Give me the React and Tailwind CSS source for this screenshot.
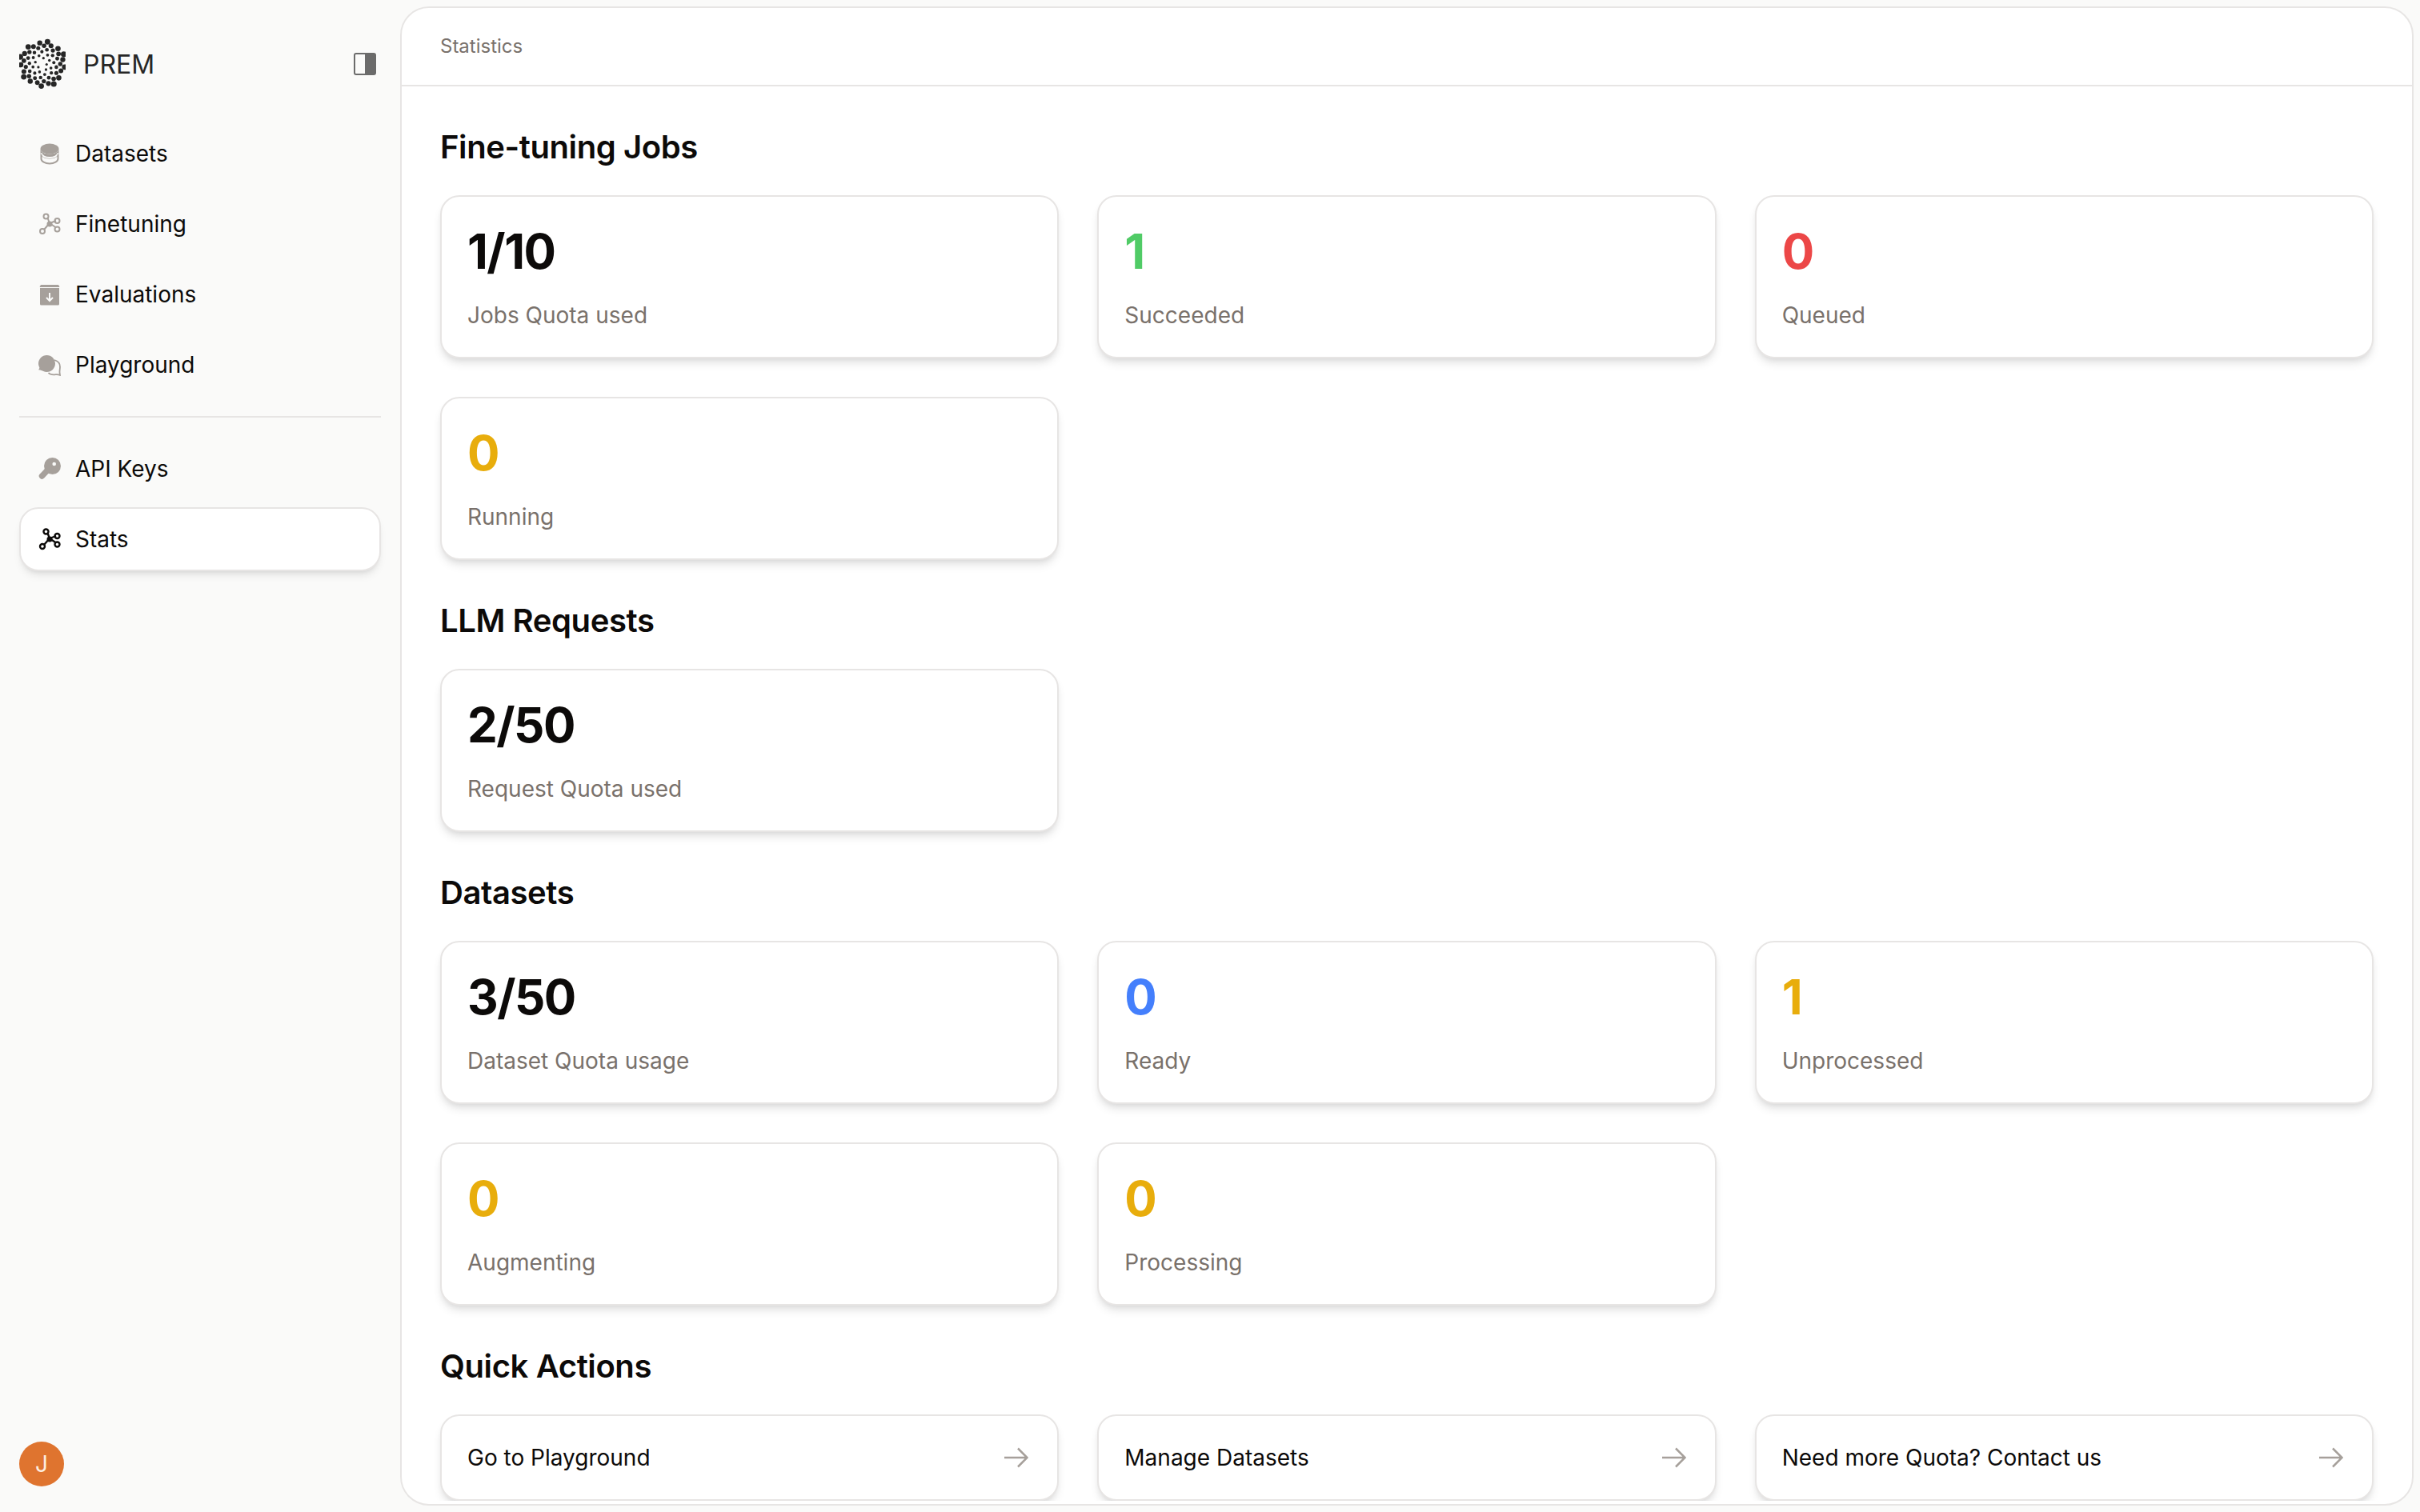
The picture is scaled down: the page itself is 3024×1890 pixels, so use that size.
import React from "react";

function Logo() {
  const dots = [];
  const cx = 29, cy = 32;
  for (let n = 2; n <= 62; n++) {
    const a = n * 2.39996 + 1.57;
    const r = 3.72 * Math.sqrt(n);
    const s = 1.5 + 2.1 * (n / 62);
    dots.push(<circle key={n} cx={cx + r * Math.cos(a)} cy={cy + r * Math.sin(a)} r={s} fill="#262626" />);
  }
  return (
    <svg width="58" height="64" viewBox="0 0 58 64" className="shrink-0">
      {dots}
    </svg>
  );
}

function PanelIcon() {
  return (
    <svg width="28" height="28" viewBox="0 0 28 28" className="shrink-0">
      <rect x="1" y="1" width="26" height="26" rx="2" fill="none" stroke="#6b6b6b" strokeWidth="2" />
      <rect x="14" y="1" width="13" height="26" rx="1" fill="#6b6b6b" />
    </svg>
  );
}

function DbIcon() {
  return (
    <svg width="28" height="28" viewBox="0 0 28 28" className="shrink-0" fill="none">
      <ellipse cx="14" cy="8" rx="11.5" ry="6.5" fill="currentColor" />
      <path d="M2.5 8v6c0 3.6 5.1 6.5 11.5 6.5s11.5-2.9 11.5-6.5V8c0 3.6-5.1 6.500-11.5 6.500S2.500 11.600 2.500 8z" fill="currentColor" />
      <path d="M3.500 13.500c1 3.400 5.300 5.500 10.500 5.500s9.500-2.100 10.500-5.500" stroke="#fafaf9" strokeWidth="2" />
      <path d="M3.500 15v5.500c0 3.300 4.700 6 10.500 6s10.500-2.700 10.500-6V15" stroke="currentColor" strokeWidth="2" />
    </svg>
  );
}

function NodesIcon({ strokeW = 2 }) {
  return (
    <svg width="28" height="28" viewBox="0 0 28 28" className="shrink-0" fill="none" stroke="currentColor" strokeWidth={strokeW}>
      <path d="M11.500 6.500 14 13M14 13 22 10M14 13 22 18.500M14 13 7 21" />
      <circle cx="9.500" cy="4.500" r="3" />
      <circle cx="23.500" cy="10" r="3" />
      <circle cx="23.500" cy="20.500" r="3" />
      <circle cx="5" cy="23" r="3" />
      <circle cx="14" cy="14" r="3.500" fill="currentColor" stroke="none" />
    </svg>
  );
}

function ArchiveIcon() {
  return (
    <svg width="28" height="28" viewBox="0 0 28 28" className="shrink-0" fill="none">
      <path d="M4 2h20c1 0 1.700.600 2 1.500l.300 1.500H1.700L2 3.500C2.300 2.600 3 2 4 2z" fill="currentColor" />
      <path d="M2 6h24v20a1.500 1.500 0 0 1-1.500 1.500h-21A1.500 1.500 0 0 1 2 26z" fill="currentColor" />
      <path d="M14 12v10M10 18l4 4 4-4" stroke="#fafaf9" strokeWidth="2" />
    </svg>
  );
}

function ChatIcon() {
  return (
    <svg width="28" height="28" viewBox="0 0 28 28" className="shrink-0" fill="none">
      <path d="M20 8c4 1.200 7 4.500 7 8.500 0 2.500-.5 4-.5 6.500 0 1.500.500 3 .500 4-1.500-.800-3.500-1-5.500-.800-3.500.500-7 0-9-2.200" stroke="currentColor" strokeWidth="1.800" />
      <path d="M10.500 2C16.300 2 21 6.700 21 12.500S16.300 23 10.500 23c-1.500 0-3-.300-4.300-.900-1.500-.800-3.200-1.600-6.200-1.900 1-.900 1.300-1.800 1.300-2.900C.6 15.800 0 14.200 0 12.500 0 6.700 4.700 2 10.500 2z" fill="currentColor" />
    </svg>
  );
}

function KeyIcon() {
  return (
    <svg width="28" height="28" viewBox="0 0 28 28" className="shrink-0" fill="none">
      <circle cx="17.500" cy="10.500" r="10.500" fill="currentColor" />
      <path d="M13 14 4.500 23" stroke="currentColor" strokeWidth="7.500" strokeLinecap="round" />
      <circle cx="19.700" cy="8" r="2.300" fill="#fafaf9" />
    </svg>
  );
}

function Arrow() {
  return (
    <svg width="30" height="26" viewBox="0 0 30 26" fill="none" stroke="#a6a09b" strokeWidth="2.500" className="shrink-0">
      <path d="M0 13h28M17 1.500 28.500 13 17 24.500" />
    </svg>
  );
}

function NavItem({ icon, label, active }) {
  return (
    <div
      className={
        "flex h-[80px] items-center gap-[18px] rounded-[24px] border-2 px-[22px] text-[28px] text-[#0c0a09] " +
        (active
          ? "border-stone-200 bg-white shadow-[0_8px_12px_-4px_rgba(0,0,0,0.1),0_4px_6px_-4px_rgba(0,0,0,0.1)]"
          : "border-transparent")
      }
    >
      <span className={active ? "text-[#0c0a09]" : "text-stone-400"}>{icon}</span>
      <span>{label}</span>
    </div>
  );
}

const cardCls =
  "rounded-[24px] border-2 border-stone-200 bg-white shadow-[0_8px_12px_-2px_rgba(0,0,0,0.1),0_4px_8px_-4px_rgba(0,0,0,0.1)]";

function Stat({ value, label, color }) {
  return (
    <div className={cardCls + " px-[32px] py-[32px]"}>
      <div className={"text-[60px] leading-[72px] font-bold tracking-[-1.5px] " + color}>{value}</div>
      <div className="mt-[24px] text-[28px] leading-[40px] text-stone-500">{label}</div>
    </div>
  );
}

function Section({ title, children }) {
  return (
    <section>
      <h2 className="mb-[32px] text-[40px] leading-[56px] font-semibold tracking-[-0.4px] text-[#0c0a09]">{title}</h2>
      <div className="grid grid-cols-3 gap-[48px]">{children}</div>
    </section>
  );
}

function Action({ label }) {
  return (
    <div className={cardCls + " flex h-[108px] items-center justify-between pl-[32px] pr-[36px]"}>
      <span className="text-[28px] text-[#0c0a09]">{label}</span>
      <Arrow />
    </div>
  );
}

export default function App() {
  const black = "text-[#0c0a09]";
  const green = "text-[#50cb66]";
  const red = "text-[#ec4747]";
  const amber = "text-[#e8ad0c]";
  const blue = "text-[#447ffc]";
  return (
    <div className="flex h-[1890px] w-[3024px] overflow-hidden bg-stone-50 font-['Inter',sans-serif]">
      <aside className="flex w-[500px] shrink-0 flex-col px-[24px] pt-[48px] pb-[32px]">
        <div className="mb-[40px] flex h-[64px] items-center justify-between pr-[6px]">
          <div className="flex items-center gap-[22px]">
            <Logo />
            <span className="pt-[2px] text-[32px] font-normal text-[#262626]">PREM</span>
          </div>
          <PanelIcon />
        </div>
        <nav className="flex flex-col gap-[8px]">
          <NavItem icon={<DbIcon />} label="Datasets" />
          <NavItem icon={<NodesIcon />} label="Finetuning" />
          <NavItem icon={<ArchiveIcon />} label="Evaluations" />
          <NavItem icon={<ChatIcon />} label="Playground" />
        </nav>
        <div className="my-[24px] h-[2px] bg-stone-200" />
        <nav className="flex flex-col gap-[8px]">
          <NavItem icon={<KeyIcon />} label="API Keys" />
          <NavItem icon={<NodesIcon strokeW={2.4} />} label="Stats" active />
        </nav>
        <div className="mt-auto flex h-[56px] w-[56px] items-center justify-center rounded-full bg-[#df742f] text-[28px] text-[#fdeee0]">
          J
        </div>
      </aside>
      <main className="my-[8px] mr-[8px] flex min-w-0 flex-1 flex-col overflow-hidden rounded-[36px] border-2 border-stone-200 bg-white">
        <header className="flex h-[98px] shrink-0 items-center border-b-2 border-stone-200 px-[48px]">
          <span className="text-[24px] text-stone-500">Statistics</span>
        </header>
        <div className="flex flex-col gap-[48px] overflow-hidden px-[48px] pt-[48px]">
          <Section title="Fine-tuning Jobs">
            <Stat value="1/10" label="Jobs Quota used" color={black} />
            <Stat value="1" label="Succeeded" color={green} />
            <Stat value="0" label="Queued" color={red} />
            <Stat value="0" label="Running" color={amber} />
          </Section>
          <Section title="LLM Requests">
            <Stat value="2/50" label="Request Quota used" color={black} />
          </Section>
          <Section title="Datasets">
            <Stat value="3/50" label="Dataset Quota usage" color={black} />
            <Stat value="0" label="Ready" color={blue} />
            <Stat value="1" label="Unprocessed" color={amber} />
            <Stat value="0" label="Augmenting" color={amber} />
            <Stat value="0" label="Processing" color={amber} />
          </Section>
          <Section title="Quick Actions">
            <Action label="Go to Playground" />
            <Action label="Manage Datasets" />
            <Action label="Need more Quota? Contact us" />
          </Section>
        </div>
      </main>
    </div>
  );
}
